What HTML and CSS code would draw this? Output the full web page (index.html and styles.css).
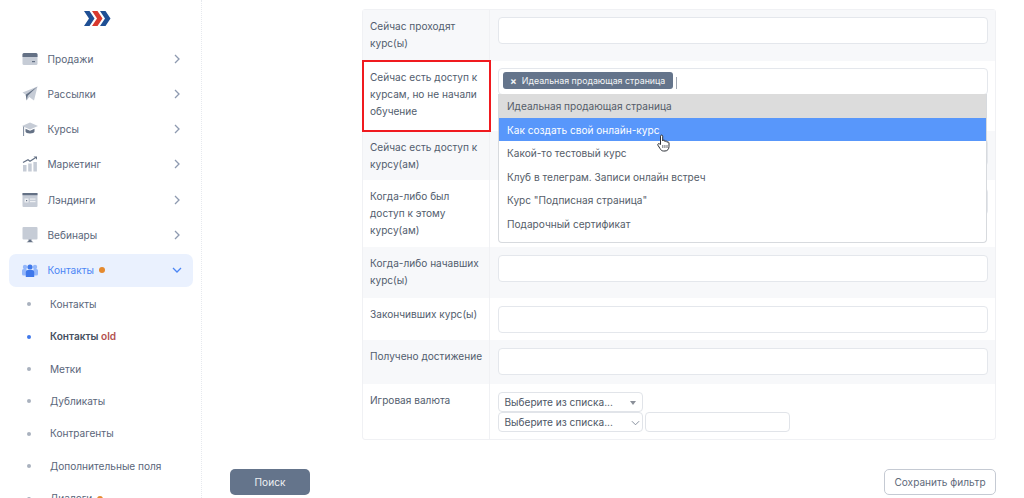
FILE: index.html
```html
<!DOCTYPE html>
<html lang="ru">
<head>
<meta charset="utf-8">
<title>Контакты old</title>
<link rel="stylesheet" href="styles.css">
</head>
<body>
<div class="page">
  <aside class="sidebar">
    <div class="logo">
      <svg width="27" height="17" viewBox="0 0 27 17"><path d="M0 1h5.500l5 7.500-5 7.500H0l5-7.500z" fill="#1f4f94"/><path d="M8 1h5.500l5 7.500-5 7.500H8l5-7.500z" fill="#d8392f"/><path d="M16 1h5.500l5 7.500-5 7.500H16l5-7.500z" fill="#1f4f94"/></svg>
    </div>
    <nav class="menu">
      <a class="item"><svg class="ico" viewBox="0 0 16 16"><rect x="0.500" y="2" width="15" height="12" rx="1.500" fill="#c6ccd6"/><path d="M0.500 3.500A1.500 1.500 0 0 1 2 2h12a1.500 1.500 0 0 1 1.500 1.500V6H.5z" fill="#647185"/><rect x="10" y="10" width="3" height="1.200" fill="#647185"/></svg><span class="lbl">Продажи</span><svg class="chev" viewBox="0 0 8 10"><path d="M2 1l4 4-4 4" fill="none" stroke="#8e9ab0" stroke-width="1.300"/></svg></a>
      <a class="item"><svg class="ico" viewBox="0 0 16 16"><path d="M15.500 .5L.5 6.500l3.200 2.200 1 5.800 2.600-3.500 4.700 3.500z" fill="#c6ccd6"/><path d="M15.500 .5L3.700 8.700l1 5.800 1-4.800z" fill="#647185"/></svg><span class="lbl">Рассылки</span><svg class="chev" viewBox="0 0 8 10"><path d="M2 1l4 4-4 4" fill="none" stroke="#8e9ab0" stroke-width="1.300"/></svg></a>
      <a class="item"><svg class="ico" viewBox="0 0 16 16"><path d="M8 1.500L0 5l8 3.500L16 5z" fill="#c6ccd6"/><path d="M3.500 7.800l4.500 2 4.500-2v2.700c0 1-2 2-4.500 2s-4.500-1-4.500-2z" fill="#647185"/><rect x="1" y="5.500" width="1.100" height="9.500" fill="#8a95a6"/></svg><span class="lbl">Курсы</span><svg class="chev" viewBox="0 0 8 10"><path d="M2 1l4 4-4 4" fill="none" stroke="#8e9ab0" stroke-width="1.300"/></svg></a>
      <a class="item"><svg class="ico" viewBox="0 0 16 16"><rect x="1" y="9" width="3.500" height="6.500" fill="#c6ccd6"/><rect x="6.200" y="7.500" width="3.500" height="8" fill="#c6ccd6"/><rect x="11.400" y="6" width="3.500" height="9.500" fill="#c6ccd6"/><path d="M1 6.500L6 3.800l2 1.400 5-3.200" fill="none" stroke="#647185" stroke-width="1.200"/><path d="M11.500.5H15v3.300z" fill="#647185"/></svg><span class="lbl">Маркетинг</span><svg class="chev" viewBox="0 0 8 10"><path d="M2 1l4 4-4 4" fill="none" stroke="#8e9ab0" stroke-width="1.300"/></svg></a>
      <a class="item"><svg class="ico" viewBox="0 0 16 16"><rect x="0.500" y="1" width="15" height="14" rx="1" fill="#c6ccd6"/><rect x="0.500" y="1" width="15" height="2.200" fill="#647185"/><rect x="2.500" y="6.500" width="4" height="4" fill="#eef0f3"/><rect x="8" y="6.500" width="5.500" height="1.200" fill="#eef0f3"/><rect x="8" y="9" width="5.500" height="1.200" fill="#eef0f3"/><rect x="4" y="8" width="1.200" height="1.200" fill="#647185"/></svg><span class="lbl">Лэндинги</span><svg class="chev" viewBox="0 0 8 10"><path d="M2 1l4 4-4 4" fill="none" stroke="#8e9ab0" stroke-width="1.300"/></svg></a>
      <a class="item"><svg class="ico" viewBox="0 0 16 16"><rect x="0.500" y="0" width="15" height="12.500" rx="1" fill="#c6ccd6"/><path d="M6.500 12.500h3v1.500l2 1.300h-7l2-1.300z" fill="#647185"/></svg><span class="lbl">Вебинары</span><svg class="chev" viewBox="0 0 8 10"><path d="M2 1l4 4-4 4" fill="none" stroke="#8e9ab0" stroke-width="1.300"/></svg></a>
      <a class="item item-active"><svg class="ico" viewBox="0 0 16 16"><circle cx="3" cy="5" r="2.200" fill="#93b7fb"/><circle cx="13" cy="5" r="2.200" fill="#93b7fb"/><path d="M0 8.500q0-1.500 1.500-1.500h3v6.500H1.500Q0 13.500 0 12zM16 8.500q0-1.500-1.500-1.500h-3v6.500h3Q16 13.500 16 12z" fill="#93b7fb"/><circle cx="8" cy="5" r="2.600" fill="#3f78ea"/><path d="M3.800 10q0-2 2-2h4.400q2 0 2 2v5H3.800z" fill="#3f78ea"/></svg><span class="lbl">Контакты</span><i class="badge"></i><svg class="chev chev-down" viewBox="0 0 10 8"><path d="M1 2l4 4 4-4" fill="none" stroke="#4c86f5" stroke-width="1.300"/></svg></a>
      <ul class="sub">
        <li class="sub-item">Контакты</li>
        <li class="sub-item sub-current">Контакты <b class="old">old</b></li>
        <li class="sub-item">Метки</li>
        <li class="sub-item">Дубликаты</li>
        <li class="sub-item">Контрагенты</li>
        <li class="sub-item">Дополнительные поля</li>
        <li class="sub-item">Диалоги<i class="badge"></i></li>
      </ul>
    </nav>
  </aside>
  <main class="main">
    <section class="table">
      <div class="row"><div class="name">Сейчас проходят курс(ы)</div><div class="field"><div class="input"></div></div></div>
      <div class="row"><div class="name name-marked">Сейчас есть доступ к курсам, но не начали обучение</div><div class="field">
        <div class="input input-multi"><span class="tag"><span class="tag-x">×</span>Идеальная продающая страница</span><span class="caret"></span></div>
        <ul class="drop">
          <li class="opt opt-chosen">Идеальная продающая страница</li>
          <li class="opt opt-hover">Как создать свой онлайн-курс</li>
          <li class="opt">Какой-то тестовый курс</li>
          <li class="opt">Клуб в телеграм. Записи онлайн встреч</li>
          <li class="opt">Курс "Подписная страница"</li>
          <li class="opt">Подарочный сертификат</li>
        </ul>
        <svg class="hand" width="13" height="18" viewBox="0 0 13 18"><path d="M3.500 10.500V2.200c0-1.500 2.200-1.500 2.200 0V7c.2-1.200 2.200-1.200 2.300 0v.6c.2-1 2-1 2.100.2v.6c.3-.8 1.900-.6 1.900.6v3.500c0 2.500-1.500 4.500-4 4.500H6.500c-1.800 0-2.600-1-3.500-2.500L.9 11.200c-.6-1.300 1-2.200 1.800-1.200z" fill="#fff" stroke="#2b2f36" stroke-width="1"/><path d="M5.800 11v3M7.900 11v3M10 11v3" stroke="#2b2f36" stroke-width=".7"/></svg>
      </div></div>
      <div class="row"><div class="name">Сейчас есть доступ к курсу(ам)</div><div class="field"><div class="input"></div></div></div>
      <div class="row"><div class="name">Когда-либо был доступ к этому курсу(ам)</div><div class="field"><div class="input"></div></div></div>
      <div class="row"><div class="name">Когда-либо начавших курс(ы)</div><div class="field"><div class="input"></div></div></div>
      <div class="row"><div class="name">Закончивших курс(ы)</div><div class="field"><div class="input"></div></div></div>
      <div class="row"><div class="name">Получено достижение</div><div class="field"><div class="input"></div></div></div>
      <div class="row"><div class="name">Игровая валюта</div><div class="field">
        <div class="sel">Выберите из списка...<i class="tri"></i></div>
        <div class="sel-line">
          <div class="sel">Выберите из списка...<svg class="sel-chev" viewBox="0 0 10 6" width="9" height="6"><path d="M1 1l4 4 4-4" fill="none" stroke="#7b8494" stroke-width="1"/></svg></div>
          <div class="mini"></div>
        </div>
      </div></div>
    </section>
    <div class="actions">
      <button class="btn btn-search">Поиск</button>
      <button class="btn btn-save">Сохранить фильтр</button>
    </div>
  </main>
</div>
</body>
</html>
```
FILE: styles.css
```css
* { box-sizing: border-box; }
html, body { margin: 0; height: 498px; overflow: hidden; background: #fff; }
body { font-family: Inter, "Liberation Sans", sans-serif; font-size: 10.100px; color: #4e5a6b; }
ul { list-style: none; margin: 0; padding: 0; }
.page { display: flex; height: 498px; overflow: hidden; }

.sidebar { width: 202px; flex: none; border-right: 1px dotted #e6e9ee; }
.logo { height: 42px; padding: 10px 0 0 84px; }
.logo svg { display: block; }
.menu { padding-left: 9px; width: 193px; }
.item { display: flex; align-items: center; height: 33px; margin-bottom: 2.300px; padding-left: 13px; border-radius: 7px; color: #5a667a; }
.ico { width: 16px; height: 16px; flex: none; margin-right: 9.500px; }
.lbl { font-size: 10.100px; }
.chev { width: 8px; height: 10px; margin-left: auto; margin-right: 12px; }
.item-active { background: #eaf1fe; color: #4c86f5; margin-bottom: 0; }
.chev-down { width: 10px; height: 8px; margin-right: 11px; margin-left: auto; }
.badge { display: inline-block; width: 6px; height: 6px; border-radius: 50%; background: #e58a2e; margin-left: 5px; }
.sub { padding-top: 1px; }
.sub-item { position: relative; height: 32.400px; line-height: 32.400px; padding-left: 41px; color: #5a667a; }
.sub-item::before { content: ""; position: absolute; left: 18px; top: 14.500px; width: 4px; height: 4px; border-radius: 50%; background: #a9b1be; }
.sub-current { font-weight: 600; color: #454f60; }
.sub-current::before { background: #3f78ea; }
.old { font-weight: 600; color: #b3514f; }

.main { flex: 1; padding: 9px 28px 0 28px; display: flex; flex-direction: column; align-items: stretch; min-width: 0; }
.table { margin-left: 132px; border: 1px solid #f0f1f4; border-radius: 3px; }
.row { display: grid; grid-template-columns: 127px 1fr; }
.row:nth-child(odd) { background: #f7f8fa; }
.row:nth-child(1) { height: 51px; }
.row:nth-child(2) { height: 70px; }
.row:nth-child(3) { height: 49px; }
.row:nth-child(4) { height: 67px; }
.row:nth-child(5) { height: 51px; }
.row:nth-child(6) { height: 42px; }
.row:nth-child(7) { height: 44px; }
.row:nth-child(8) { height: 55px; }
.name { padding: 8px 5px 0 7px; line-height: 17px; color: #525d6e; border-right: 1px solid #f0f1f4; }
.name-marked { outline: 2px solid #f01a1f; outline-offset: -1px; position: relative; z-index: 1; }
.field { position: relative; padding: 7px 7px 0 8px; }
.row:nth-child(n+3) .field { padding-top: 8px; }
.input { height: 27px; background: #fff; border: 1px solid #e4e7ec; border-radius: 4px; }
.input-multi { display: flex; align-items: flex-start; padding: 3px 0 0 4px; }
.tag { display: flex; align-items: center; width: 170px; height: 17px; background: #64748b; border-radius: 3px; color: #f3f4f6; font-size: 8.800px; white-space: nowrap; padding-left: 7px; }
.tag-x { margin-right: 5px; font-weight: 700; font-size: 10px; }
.caret { width: 1px; height: 12px; margin: 5px 0 0 3px; background: #a0a6b0; }
.drop { position: absolute; z-index: 2; left: 8px; top: 33px; width: 489px; height: 149px; background: #fff; border: 1px solid #d7dade; border-top: 0; border-radius: 0 0 4px 4px; }
.opt { height: 23.500px; line-height: 25px; padding-left: 8px; color: #555d69; }
.opt-chosen { background: #dcdcdc; }
.opt-hover { background: #5897fb; color: #fff; }
.hand { position: absolute; z-index: 3; left: 167px; top: 73px; }
.sel { position: relative; display: flex; align-items: center; width: 145px; height: 20px; border: 1px solid #e1e4e9; border-radius: 4px; padding-left: 5.500px; background: #fff; color: #4e5766; }
.tri { position: absolute; right: 6px; top: 8px; border: 3px solid transparent; border-top: 4px solid #8a8f98; border-bottom: 0; }
.sel-chev { position: absolute; right: 2px; top: 7px; }
.sel-line { display: flex; gap: 2px; }
.mini { width: 145px; height: 20px; border: 1px solid #e1e4e9; border-radius: 4px; background: #fff; }

.actions { display: flex; justify-content: space-between; margin-top: 29px; }
.btn { font: 10.100px Inter, "Liberation Sans", sans-serif; height: 26px; border-radius: 5px; cursor: pointer; }
.btn-search { width: 80px; background: #64748b; border: 0; color: #eef0f3; }
.btn-save { width: 112px; background: #fff; border: 1px solid #c5cad3; color: #5f6a7b; }
```
